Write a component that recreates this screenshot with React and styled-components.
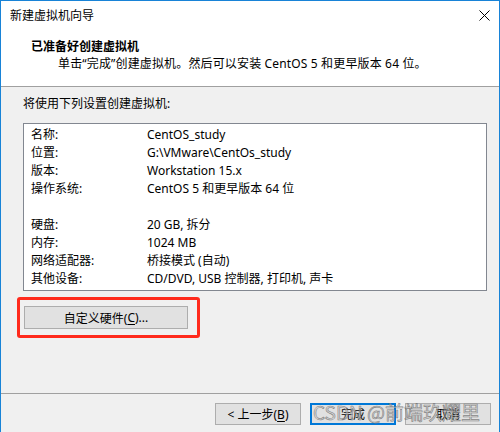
import React from 'react'
import styled, { createGlobalStyle } from 'styled-components'

const GlobalStyle = createGlobalStyle`
  html, body {
    margin: 0;
    padding: 0;
    background: #f0f0f0;
  }
  body {
    font-family: "Noto Sans", "Noto Sans CJK SC", sans-serif;
    font-size: 12px;
    color: #000;
  }
`

const rows = [
  ['名称:', 'CentOS_study'],
  ['位置:', 'G:\\VMware\\CentOs_study'],
  ['版本:', 'Workstation 15.x'],
  ['操作系统:', 'CentOS 5 和更早版本 64 位'],
  null,
  ['硬盘:', '20 GB, 拆分'],
  ['内存:', '1024 MB'],
  ['网络适配器:', '桥接模式 (自动)'],
  ['其他设备:', 'CD/DVD, USB 控制器, 打印机, 声卡'],
]

function CloseIcon() {
  return (
    <svg width="11" height="11" viewBox="0 0 11 11">
      <path d="M0.5 0.5 L10.5 10.5 M10.5 0.5 L0.5 10.5" stroke="#000" strokeWidth="1" fill="none" />
    </svg>
  )
}

function App() {
  return (
    <>
      <GlobalStyle />
      <Window>
        <TitleBar>
          <Title>新建虚拟机向导</Title>
          <CloseButton>
            <CloseIcon />
          </CloseButton>
        </TitleBar>
        <Header>
          <HeaderTitle>已准备好创建虚拟机</HeaderTitle>
          <HeaderSub>单击“完成”创建虚拟机。然后可以安装 CentOS 5 和更早版本 64 位。</HeaderSub>
        </Header>
        <Body>
          <Caption>将使用下列设置创建虚拟机:</Caption>
          <Summary>
            {rows.map((row, i) =>
              row ? (
                <Row key={i}>
                  <Label>{row[0]}</Label>
                  <Value>{row[1]}</Value>
                </Row>
              ) : (
                <Row key={i} />
              )
            )}
          </Summary>
          <Highlight>
            <Button $width="164px" $height="23px">
              自定义硬件(<u>C</u>)...
            </Button>
          </Highlight>
        </Body>
        <Footer>
          <Button>
            &lt; 上一步(<u>B</u>)
          </Button>
          <Button $primary>完成</Button>
          <Button>取消</Button>
          <Watermark>CSDN @前端玖耀里</Watermark>
        </Footer>
      </Window>
    </>
  )
}

export default App

const Window = styled.div`
  width: 500px;
  height: 432px;
  box-sizing: border-box;
  border: 1px solid #1883d7;
  border-bottom: none;
  background: #f0f0f0;
  display: flex;
  flex-direction: column;
  overflow: hidden;
`

const TitleBar = styled.div`
  height: 29px;
  background: #fff;
  display: flex;
  align-items: center;
  justify-content: space-between;
  padding-left: 9px;
`

const Title = styled.span`
  font-size: 12px;
  line-height: 16px;
`

const CloseButton = styled.div`
  width: 46px;
  height: 29px;
  display: flex;
  align-items: center;
  justify-content: center;
  margin-right: -8px;
`

const Header = styled.div`
  background: #fff;
  height: 57px;
  box-sizing: border-box;
  padding: 8px 0 0 30px;
  border-bottom: 1px solid #a0a0a0;
`

const HeaderTitle = styled.div`
  font-weight: bold;
  line-height: 17px;
`

const HeaderSub = styled.div`
  line-height: 17px;
  padding-left: 27px;
  letter-spacing: 0.15px;
`

const Body = styled.div`
  flex: 1;
  padding: 8px 0 0 22px;
`

const Caption = styled.div`
  line-height: 17px;
  margin-bottom: 11px;
`

const Summary = styled.div`
  width: 464px;
  box-sizing: border-box;
  border: 1px solid #828790;
  background: #fff;
  padding: 2px 0 2px 7px;
`

const Row = styled.div`
  display: flex;
  height: 18px;
  line-height: 18px;
`

const Label = styled.span`
  width: 116px;
  flex-shrink: 0;
`

const Value = styled.span`
  white-space: nowrap;
`

const Highlight = styled.div`
  display: inline-flex;
  margin: 6px 0 0 -6px;
  padding: 6px 9px 6px 4px;
  border: 3px solid #ff2a1c;
  border-radius: 3px;
`

const Button = styled.div`
  width: ${(p) => p.$width || '86px'};
  height: ${(p) => p.$height || '22px'};
  box-sizing: border-box;
  border: ${(p) => (p.$primary ? '2px solid #0078d7' : '1px solid #adadad')};
  background: #e1e1e1;
  display: flex;
  align-items: center;
  justify-content: center;
  white-space: nowrap;
  u {
    text-underline-offset: 2px;
  }
`

const Footer = styled.div`
  position: relative;
  height: 39px;
  border-top: 1px solid #a0a0a0;
  display: flex;
  justify-content: flex-end;
  gap: 9px;
  padding: 9px 8px 0 0;
  box-sizing: border-box;
`

const Watermark = styled.div`
  position: absolute;
  left: 312px;
  top: 5px;
  font-family: "Noto Sans CJK SC", "Liberation Sans", sans-serif;
  font-size: 19px;
  line-height: 26px;
  color: rgba(200, 200, 200, 0.6);
  -webkit-text-stroke: 0.6px rgba(100, 100, 100, 0.75);
  white-space: nowrap;
  pointer-events: none;
`
